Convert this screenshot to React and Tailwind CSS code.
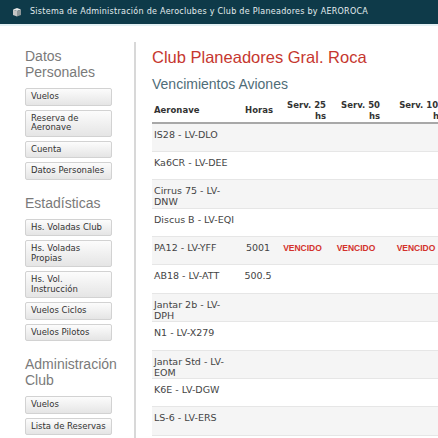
import React from 'react';

const sections = [
  {
    title: ['Datos', 'Personales'],
    items: ['Vuelos', 'Reserva de Aeronave', 'Cuenta', 'Datos Personales'],
  },
  {
    title: ['Estadísticas'],
    items: ['Hs. Voladas Club', 'Hs. Voladas Propias', 'Hs. Vol. Instrucción', 'Vuelos Ciclos', 'Vuelos Pilotos'],
  },
  {
    title: ['Administración', 'Club'],
    items: ['Vuelos', 'Lista de Reservas', 'Aeronaves'],
  },
];

const rows = [
  { name: 'IS28 - LV-DLO' },
  { name: 'Ka6CR - LV-DEE' },
  { name: 'Cirrus 75 - LV-DNW' },
  { name: 'Discus B - LV-EQI' },
  { name: 'PA12 - LV-YFF', horas: '5001', s25: 'VENCIDO', s50: 'VENCIDO', s100: 'VENCIDO' },
  { name: 'AB18 - LV-ATT', horas: '500.5' },
  { name: 'Jantar 2b - LV-DPH' },
  { name: 'N1 - LV-X279' },
  { name: 'Jantar Std - LV-EOM' },
  { name: 'K6E - LV-DGW' },
  { name: 'LS-6 - LV-ERS' },
  { name: 'Std Libelle - LV-EXD' },
];

function HeaderIcon() {
  return (
    <svg width="10" height="10" viewBox="0 0 10 10" className="shrink-0">
      <path d="M1 2.5 L5 1 L9 2.5 L5 4 Z" fill="#e8e8e8" />
      <path d="M1 2.5 L5 4 L5 9.5 L1 8 Z" fill="#c4c4c4" />
      <path d="M5 4 L9 2.5 L9 8 L5 9.5 Z" fill="#8e9698" />
    </svg>
  );
}

function SideButton({ label }) {
  return (
    <div className="w-[87px] mb-[4px] border border-[#d2d2d2] rounded-[2px] bg-linear-to-b from-[#fcfcfc] to-[#e5e5e5] pl-[5px] pr-[3px] py-[3px] text-[8.5px] leading-[9.5px] text-[#333] font-['DejaVu_Sans',Verdana,sans-serif]">
      {label}
    </div>
  );
}

function Sidebar() {
  return (
    <div className="w-[136px] shrink-0 border-r-2 border-[#d8d8d8] pl-[25px] pt-[6px]">
      {sections.map((s, i) => (
        <div key={i} className={i > 0 ? 'mt-[15px]' : ''}>
          <h2 className="text-[14px] leading-[16px] text-[#7a7a7a] mb-[8px] font-['Liberation_Sans',Arial,sans-serif]">
            {s.title.map((t, j) => (
              <div key={j}>{t}</div>
            ))}
          </h2>
          {s.items.map((it, j) => (
            <SideButton key={j} label={it} />
          ))}
        </div>
      ))}
    </div>
  );
}

function Vencido({ value }) {
  if (!value) return null;
  return <span className="font-bold text-[8.5px] text-[#d3322c] font-['Liberation_Sans',Arial,sans-serif]">{value}</span>;
}

function Main() {
  return (
    <div className="flex-1 pl-[16px] pt-[5px] font-['Liberation_Sans',Arial,sans-serif]">
      <h1 className="text-[16.5px] leading-[20px] text-[#c6372f] mb-[8px]">Club Planeadores Gral. Roca</h1>
      <h3 className="text-[14px] leading-[18px] text-[#4f6d78] mb-[6px]">Vencimientos Aviones</h3>
      <table className="table-fixed border-collapse w-[293px] font-['DejaVu_Sans',Verdana,sans-serif] text-[#444]">
        <thead>
          <tr className="border-b-2 border-[#a8a8a8] text-[8.5px] leading-[11px] font-bold text-[#333]">
            <th className="w-[88px] text-left pl-[2px] h-[24px] align-middle">Aeronave</th>
            <th className="w-[36px] text-right pr-[3px] align-middle">Horas</th>
            <th className="w-[53px] text-right pr-[3px] align-middle">Serv. 25<br />hs</th>
            <th className="w-[54px] text-right pr-[3px] align-middle">Serv. 50<br />hs</th>
            <th className="w-[62px] text-right pr-[1px] align-middle">Serv. 100<br />hs</th>
          </tr>
        </thead>
        <tbody>
          {rows.map((r, i) => (
            <tr
              key={i}
              className={`h-[28.4px] border-b border-[#e6e6e6] text-[9.5px] leading-[11px] ${i % 2 === 0 ? 'bg-[#f5f5f5]' : 'bg-white'}`}
            >
              <td className="align-top pt-[5px] pl-[2px] pr-[6px]">{r.name}</td>
              <td className="align-top pt-[5px] text-center">{r.horas}</td>
              <td className="align-top pt-[5px] text-center"><Vencido value={r.s25} /></td>
              <td className="align-top pt-[5px] text-center"><Vencido value={r.s50} /></td>
              <td className="align-top pt-[5px] text-center pl-[4px]"><Vencido value={r.s100} /></td>
            </tr>
          ))}
        </tbody>
      </table>
    </div>
  );
}

export default function App() {
  return (
    <div className="w-[438px] h-[438px] overflow-hidden bg-white">
      <div className="h-[24px] bg-[#0e3a49] flex items-center pl-[12px] gap-[8px] border-b-2 border-[#e4f1f4] box-content">
        <HeaderIcon />
        <span className="text-[8px] tracking-[0.27px] text-[#e3ecee] font-['DejaVu_Sans',Verdana,sans-serif] whitespace-nowrap">
          Sistema de Administración de Aeroclubes y Club de Planeadores by AEROROCA
        </span>
      </div>
      <div className="flex pt-[16px] min-h-[420px]">
        <Sidebar />
        <Main />
      </div>
    </div>
  );
}
